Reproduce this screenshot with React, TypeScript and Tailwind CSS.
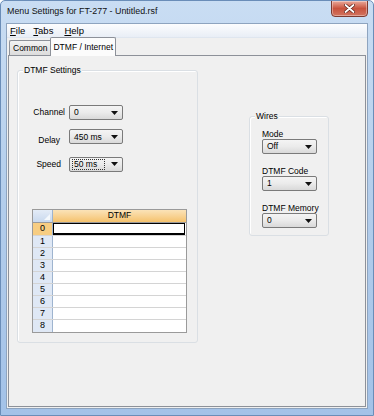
import React from 'react';

const FONT = "font-['Liberation_Sans',Arial,sans-serif]";

function Select({ value, focus, w }: { value: string; focus?: boolean; w: string }) {
  return (
    <div
      className={`${w} h-[15px] flex items-center border border-[#7a7a7a] rounded-[2px] bg-gradient-to-b from-[#f4f4f4] via-[#ebebeb] to-[#d9d9d9] pl-[2px] pr-[4px]`}
    >
      <div
        className={`flex-1 h-[11px] flex items-center pl-[1px] leading-none ${
          focus ? 'border border-dotted border-[#333]' : 'border border-transparent'
        }`}
      >
        {value}
      </div>
      <svg width="7" height="4" viewBox="0 0 7 4" className="ml-[6px]">
        <path d="M0 0h7L3.5 4z" fill="#111" />
      </svg>
    </div>
  );
}

function Group({ label, className, children }: { label: string; className: string; children: React.ReactNode }) {
  return (
    <div className={`relative border border-[#dadfe4] rounded-[3px] shadow-[inset_1px_1px_0_#fff] ${className}`}>
      <span className="absolute left-[5px] top-[-6px] px-[1px] bg-[#f0f0f0] leading-[10px]">{label}</span>
      {children}
    </div>
  );
}

const rows = ['0', '1', '2', '3', '4', '5', '6', '7', '8'];

export default function App() {
  return (
    <div
      className={`${FONT} relative w-[374px] h-[416px] flex flex-col overflow-hidden text-[8.5px] text-black border border-[#6a8db8] rounded-t-[5px] bg-gradient-to-b from-[#c9ddf3] via-[#b3cdeb] to-[#a3c2e8]`}
    >
      {/* title bar */}
      <div className="h-[22px] flex items-center pl-[6px] text-[8.9px] text-[#111]">
        Menu Settings for FT-277 - Untitled.rsf
      </div>
      <div className="absolute top-[-1px] right-[5px] w-[37px] h-[17px] rounded-b-[4px] border border-[#7d3a30] bg-gradient-to-b from-[#e9a99b] via-[#c8523d] to-[#d2745f] flex items-center justify-center shadow-[inset_0_0_0_1px_rgba(255,255,255,0.35)]">
        <svg width="11" height="9" viewBox="0 0 11 9">
          <path d="M1.5 1l8 7M9.5 1l-8 7" stroke="#5a2018" strokeWidth="3.2" strokeLinecap="round" />
          <path d="M1.5 1l8 7M9.5 1l-8 7" stroke="#fff" strokeWidth="1.8" strokeLinecap="round" />
        </svg>
      </div>

      {/* client area */}
      <div className="flex-1 mx-[5px] mb-[6px] flex flex-col border border-[#8ea4bf] bg-[#f0f0f0]">
        {/* menu bar */}
        <div className="h-[14px] flex items-center gap-[8px] pl-[3px] pt-[1px] text-[9.5px] bg-gradient-to-b from-[#fcfdfe] to-[#e9eef6] border-b border-[#dfe6ef]">
          <span>
            <u>F</u>ile
          </span>
          <span>
            <u>T</u>abs
          </span>
          <span className="ml-[3px]">
            <u>H</u>elp
          </span>
        </div>

        {/* tabs */}
        <div className="h-[17px] flex items-end pl-[2px] relative z-10">
          <div className="h-[16px] px-[3px] flex items-center border border-[#8d9199] border-r-0 rounded-tl-[2px] bg-gradient-to-b from-[#f3f3f3] to-[#dcdcdc] mb-[-1px]">
            Common
          </div>
          <div className="h-[19px] px-[2px] flex items-center border border-[#8d9199] border-b-0 rounded-t-[2px] bg-[#fcfcfc] mb-[-1px]">
            DTMF / Internet
          </div>
        </div>

        {/* tab page */}
        <div className="flex-1 mx-[1px] mb-[1px] border border-[#8d9199] bg-[#f0f0f0] flex items-start pl-[8px] pt-[14px]">
          <Group label="DTMF Settings" className="w-[181px] h-[273px] pl-[14px]">
            <div className="flex flex-col pt-[34px]">
              <div className="flex items-center">
                <span className="w-[33px] text-right">Channel</span>
                <div className="ml-[4px]">
                  <Select value="0" w="w-[54px]" />
                </div>
              </div>
              <div className="flex items-center mt-[7px]">
                <span className="w-[28px] text-right pt-[7px]">Delay</span>
                <div className="ml-[9px]">
                  <Select value="450 ms" w="w-[54px]" />
                </div>
              </div>
              <div className="flex items-center mt-[10px]">
                <span className="w-[29px] text-right">Speed</span>
                <div className="ml-[8px]">
                  <Select value="50 ms" focus w="w-[54px]" />
                </div>
              </div>
            </div>

            {/* grid */}
            <div className="mt-[37px] w-[155px] border border-[#9a9a9a] bg-white">
              <div className="flex h-[13px] border-b border-[#9a9a9a]">
                <div className="w-[20px] relative border-r border-[#9eb4cf] bg-gradient-to-b from-[#e4ecf7] to-[#c9d9ee]">
                  <svg width="6" height="6" viewBox="0 0 6 6" className="absolute right-[2px] bottom-[2px]">
                    <path d="M6 0v6H0z" fill="#f4f8fc" />
                  </svg>
                </div>
                <div className="flex-1 flex items-center justify-center bg-gradient-to-b from-[#fbe3b8] to-[#f5c26c]">
                  DTMF
                </div>
              </div>
              {rows.map((r, i) => (
                <div
                  key={r}
                  className={`flex border-b border-[#d4d4d4] last:border-b-0 ${i === 0 ? 'h-[13px]' : 'h-[12px]'}`}
                >
                  <div
                    className={`w-[20px] flex items-center justify-center text-[9px] border-r border-[#9eb4cf] ${
                      i === 0 ? 'bg-[#f7cd82]' : 'bg-[#dfe8f5]'
                    }`}
                  >
                    {r}
                  </div>
                  {i === 0 ? (
                    <div className="flex-1 border border-black border-b-2 mr-[1px]" />
                  ) : (
                    <div className="flex-1" />
                  )}
                </div>
              ))}
            </div>
          </Group>

          <Group label="Wires" className="w-[80px] h-[120px] ml-[51px] mt-[46px] pl-[12px] pt-[12px]">
            <div className="flex flex-col">
              <span className="leading-[10px]">Mode</span>
              <Select value="Off" w="w-[55px]" />
              <span className="leading-[10px] mt-[12px]">DTMF Code</span>
              <Select value="1" w="w-[55px]" />
              <span className="leading-[10px] mt-[12px]">DTMF Memory</span>
              <Select value="0" w="w-[55px]" />
            </div>
          </Group>
        </div>
      </div>
    </div>
  );
}
